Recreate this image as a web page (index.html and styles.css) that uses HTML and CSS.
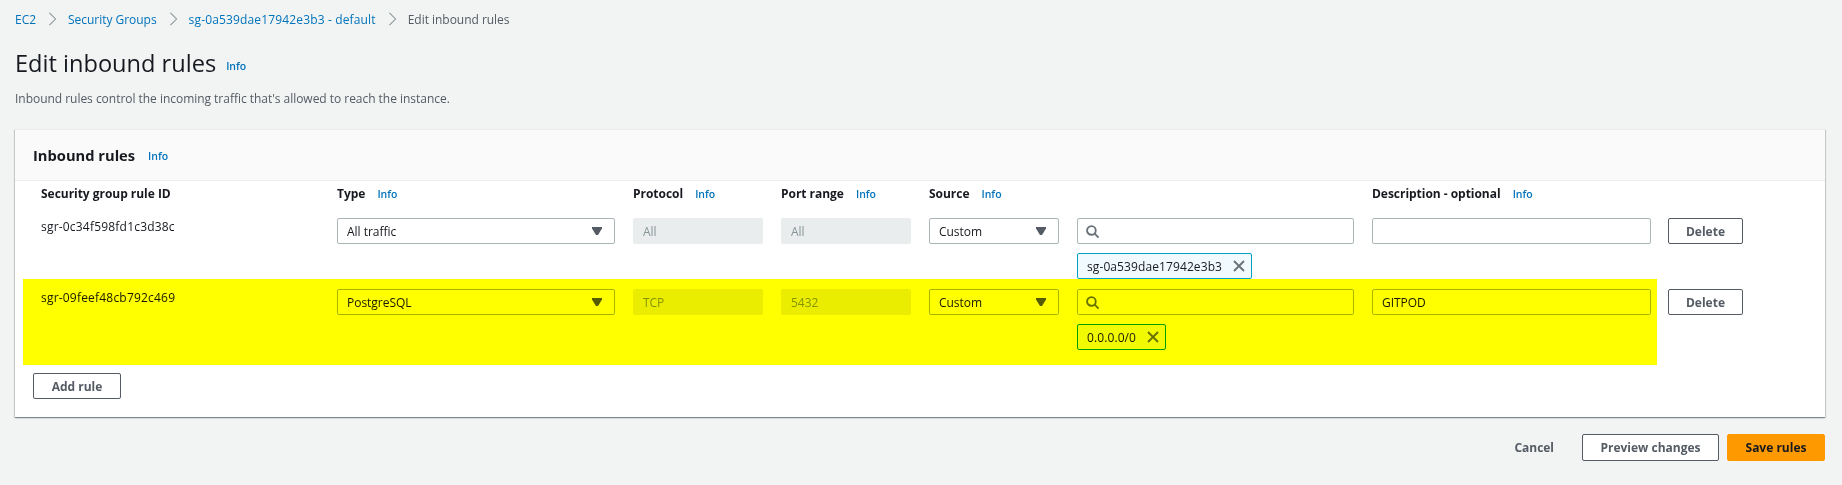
FILE: index.html
```html
<!DOCTYPE html>
<html lang="en">
<head>
    <meta charset="UTF-8">
    <meta name="viewport" content="width=device-width, initial-scale=1.0">
    <title>Edit inbound rules</title>
    <link rel="stylesheet" href="styles.css">
</head>
<body>
    <nav class="breadcrumbs">
        <a href="#">EC2</a>
        <svg class="crumb-sep" viewBox="0 0 10 16"><path d="M1.5 1l7 7-7 7"/></svg>
        <a href="#">Security Groups</a>
        <svg class="crumb-sep" viewBox="0 0 10 16"><path d="M1.5 1l7 7-7 7"/></svg>
        <a class="sg-link" href="#">sg-0a539dae17942e3b3 - default</a>
        <svg class="crumb-sep" viewBox="0 0 10 16"><path d="M1.5 1l7 7-7 7"/></svg>
        <span>Edit inbound rules</span>
    </nav>

    <div class="page-title">
        <h1>Edit inbound rules</h1>
        <a class="info" href="#">Info</a>
    </div>
    <p class="page-desc">Inbound rules control the incoming traffic that's allowed to reach the instance.</p>

    <section class="card">
        <div class="card-header">
            <h2>Inbound rules</h2>
            <a class="info" href="#">Info</a>
        </div>

        <div class="rule-row">
            <div class="rule-fields col-heads">
                <div class="col-head">Security group rule ID</div>
                <div class="col-head">Type <a class="info" href="#">Info</a></div>
                <div class="col-head">Protocol <a class="info" href="#">Info</a></div>
                <div class="col-head">Port range <a class="info" href="#">Info</a></div>
                <div class="col-head">Source <a class="info" href="#">Info</a></div>
                <div></div>
                <div class="col-head">Description - optional <a class="info" href="#">Info</a></div>
            </div>
        </div>

        <div class="rule-row">
            <div class="rule-fields">
                <div class="rule-id">sgr-0c34f598fd1c3d38c</div>
                <div class="select">All traffic<svg class="caret" viewBox="0 0 10 8"><path d="M0 0h10v1.5L6 8H4L0 1.5z"/></svg></div>
                <div class="field disabled">All</div>
                <div class="field disabled">All</div>
                <div class="select">Custom<svg class="caret" viewBox="0 0 10 8"><path d="M0 0h10v1.5L6 8H4L0 1.5z"/></svg></div>
                <div class="source-cell">
                    <div class="field">
                        <svg class="search" viewBox="0 0 12 12"><circle cx="5" cy="5" r="4"/><path d="M8 8l3.6 3.6"/></svg>
                    </div>
                    <div class="chip">sg-0a539dae17942e3b3<svg class="chip-x" viewBox="0 0 12 12"><path d="M1 1l10 10M11 1L1 11"/></svg></div>
                </div>
                <div class="field"></div>
            </div>
            <button class="btn">Delete</button>
        </div>

        <div class="rule-row">
            <div class="rule-fields highlight">
                <div class="rule-id">sgr-09feef48cb792c469</div>
                <div class="select">PostgreSQL<svg class="caret" viewBox="0 0 10 8"><path d="M0 0h10v1.5L6 8H4L0 1.5z"/></svg></div>
                <div class="field disabled">TCP</div>
                <div class="field disabled">5432</div>
                <div class="select">Custom<svg class="caret" viewBox="0 0 10 8"><path d="M0 0h10v1.5L6 8H4L0 1.5z"/></svg></div>
                <div class="source-cell">
                    <div class="field">
                        <svg class="search" viewBox="0 0 12 12"><circle cx="5" cy="5" r="4"/><path d="M8 8l3.6 3.6"/></svg>
                    </div>
                    <div class="chip">0.0.0.0/0<svg class="chip-x" viewBox="0 0 12 12"><path d="M1 1l10 10M11 1L1 11"/></svg></div>
                </div>
                <div class="field">GITPOD</div>
            </div>
            <button class="btn">Delete</button>
        </div>

        <button class="btn add-rule">Add rule</button>
    </section>

    <div class="actions">
        <a class="cancel" href="#">Cancel</a>
        <button class="btn preview">Preview changes</button>
        <button class="btn primary">Save rules</button>
    </div>
</body>
</html>
```

FILE: styles.css
```css
* {
    box-sizing: border-box;
}
body {
    margin: 0;
    height: 485px;
    padding: 0 17px 0 15px;
    overflow: hidden;
    font-family: "Open Sans", "Noto Sans", sans-serif;
    font-size: 12px;
    letter-spacing: -0.03px;
    color: #16191f;
    background-color: #f2f3f3;
}
a {
    color: #0073bb;
    text-decoration: none;
}
.breadcrumbs {
    display: flex;
    align-items: center;
    height: 38px;
    color: #545b64;
}
.sg-link {
    letter-spacing: 0.15px;
}
.crumb-sep {
    width: 9px;
    height: 14px;
    margin: 0 11px 0 12px;
    fill: none;
    stroke: #879596;
    stroke-width: 1.2;
}
.page-title {
    display: flex;
    align-items: center;
    gap: 10px;
    height: 50px;
}
h1 {
    margin: 0;
    font-size: 23.6px;
    font-weight: 400;
    letter-spacing: 0;
}
.info {
    font-size: 10.5px;
    font-weight: 600;
    margin-left: 9px;
}
.page-title .info {
    margin: 6px 0 0;
}
.page-desc {
    margin: 0;
    height: 41px;
    padding-top: 3px;
    line-height: 16px;
    color: #545b64;
}
.card {
    height: 288px;
    background-color: #fff;
    border-top: 1px solid #eaeded;
    box-shadow: 0 1px 1px 0 rgba(0, 28, 36, 0.3), 1px 1px 1px 0 rgba(0, 28, 36, 0.15), -1px 1px 1px 0 rgba(0, 28, 36, 0.15);
}
.card-header {
    display: flex;
    align-items: center;
    height: 51px;
    padding-left: 18px;
    background-color: #fafafa;
    border-bottom: 1px solid #eaeded;
}
h2 {
    margin: 0;
    font-size: 14.7px;
    font-weight: 700;
    letter-spacing: 0;
}
.card-header .info {
    margin: 1px 0 0 13px;
}
.rule-row {
    display: flex;
    align-items: flex-start;
    padding-left: 8px;
}
.rule-fields {
    display: grid;
    grid-template-columns: 278px 278px 130px 130px 130px 277px 279px;
    column-gap: 18px;
    width: 1634px;
    padding: 10px 6px 0 18px;
}
.col-heads {
    height: 27px;
    padding-top: 5px;
}
.col-head {
    font-weight: 700;
    line-height: 16px;
}
.highlight {
    position: relative;
    height: 86px;
}
/* highlighter pen over the row, tints the fields too */
.highlight::after {
    content: "";
    position: absolute;
    top: 0;
    right: 0;
    bottom: 0;
    left: 0;
    background-color: #ff0;
    mix-blend-mode: multiply;
}
.rule-id {
    line-height: 18px;
    letter-spacing: 0.2px;
}
.select,
.field {
    display: flex;
    align-items: center;
    height: 26px;
    padding: 0 9px;
    background-color: #fff;
    border: 1px solid #aab7b8;
    border-radius: 2px;
}
.select {
    justify-content: space-between;
}
.caret {
    width: 10px;
    height: 8px;
    margin-right: 3px;
    fill: #545b64;
}
.field.disabled {
    color: #879596;
    background-color: #eaeded;
    border-color: #eaeded;
}
.search {
    width: 13px;
    height: 13px;
    margin-left: -1px;
    fill: none;
    stroke: #687078;
    stroke-width: 1.7;
}
.chip {
    display: inline-flex;
    align-items: center;
    gap: 11px;
    height: 26px;
    margin-top: 9px;
    padding: 0 6px 0 9px;
    letter-spacing: 0.1px;
    background-color: #f1faff;
    border: 1px solid #00a1c9;
    border-radius: 2px;
}
.chip-x {
    width: 12px;
    height: 12px;
    fill: none;
    stroke: #687078;
    stroke-width: 1.8;
}
.btn {
    height: 26px;
    padding: 0 18px;
    font-family: inherit;
    font-size: 12px;
    font-weight: 700;
    color: #545b64;
    background-color: #fff;
    border: 1px solid #545b64;
    border-radius: 2px;
}
.rule-row .btn {
    width: 75px;
    margin: 10px 0 0 11px;
    padding: 0;
}
.add-rule {
    display: block;
    width: 88px;
    margin: 8px 0 0 18px;
    padding: 0;
}
.actions {
    display: flex;
    align-items: center;
    justify-content: flex-end;
    gap: 8px;
    margin-top: 17px;
}
.cancel {
    margin-right: 20px;
    font-weight: 700;
    color: #545b64;
}
.preview {
    width: 137px;
    height: 27px;
    padding: 0;
}
.primary {
    width: 98px;
    height: 27px;
    padding: 0;
    color: #16191f;
    background-color: #f90;
    border-color: #f90;
}
```
